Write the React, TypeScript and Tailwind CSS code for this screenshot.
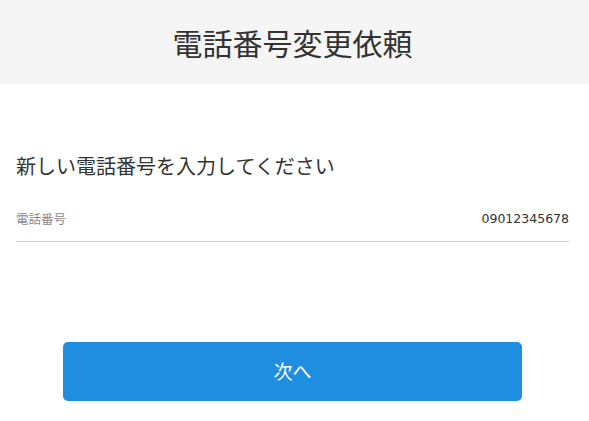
import React from 'react';

const font = { fontFamily: '"Noto Sans CJK JP", "Noto Sans", sans-serif' };

export default function App() {
  return (
    <div className="w-[589px] h-[421px] bg-white text-[#333]" style={font}>
      <header className="h-[84px] bg-[#f5f5f5] flex items-center justify-center pr-1">
        <h1 className="text-[30px] leading-none text-[#333]">電話番号変更依頼</h1>
      </header>
      <main className="pl-4 pr-5 pt-[72px]">
        <p className="text-[20px] leading-none text-[#333]">新しい電話番号を入力してください</p>
        <div className="mt-[34px] flex items-center justify-between border-b border-[#cccccc] pb-[13px]">
          <span className="text-[12.5px] leading-[18px] text-[#8a8a8a]">電話番号</span>
          <span className="text-[12.5px] leading-[18px] text-[#333]" style={{ fontFamily: '"DejaVu Sans", sans-serif' }}>09012345678</span>
        </div>
        <div className="mt-[100px] flex justify-center">
          <button className="w-[459px] h-[59px] rounded-[5px] bg-[#208ee0] text-white text-[19px]">次へ</button>
        </div>
      </main>
    </div>
  );
}
